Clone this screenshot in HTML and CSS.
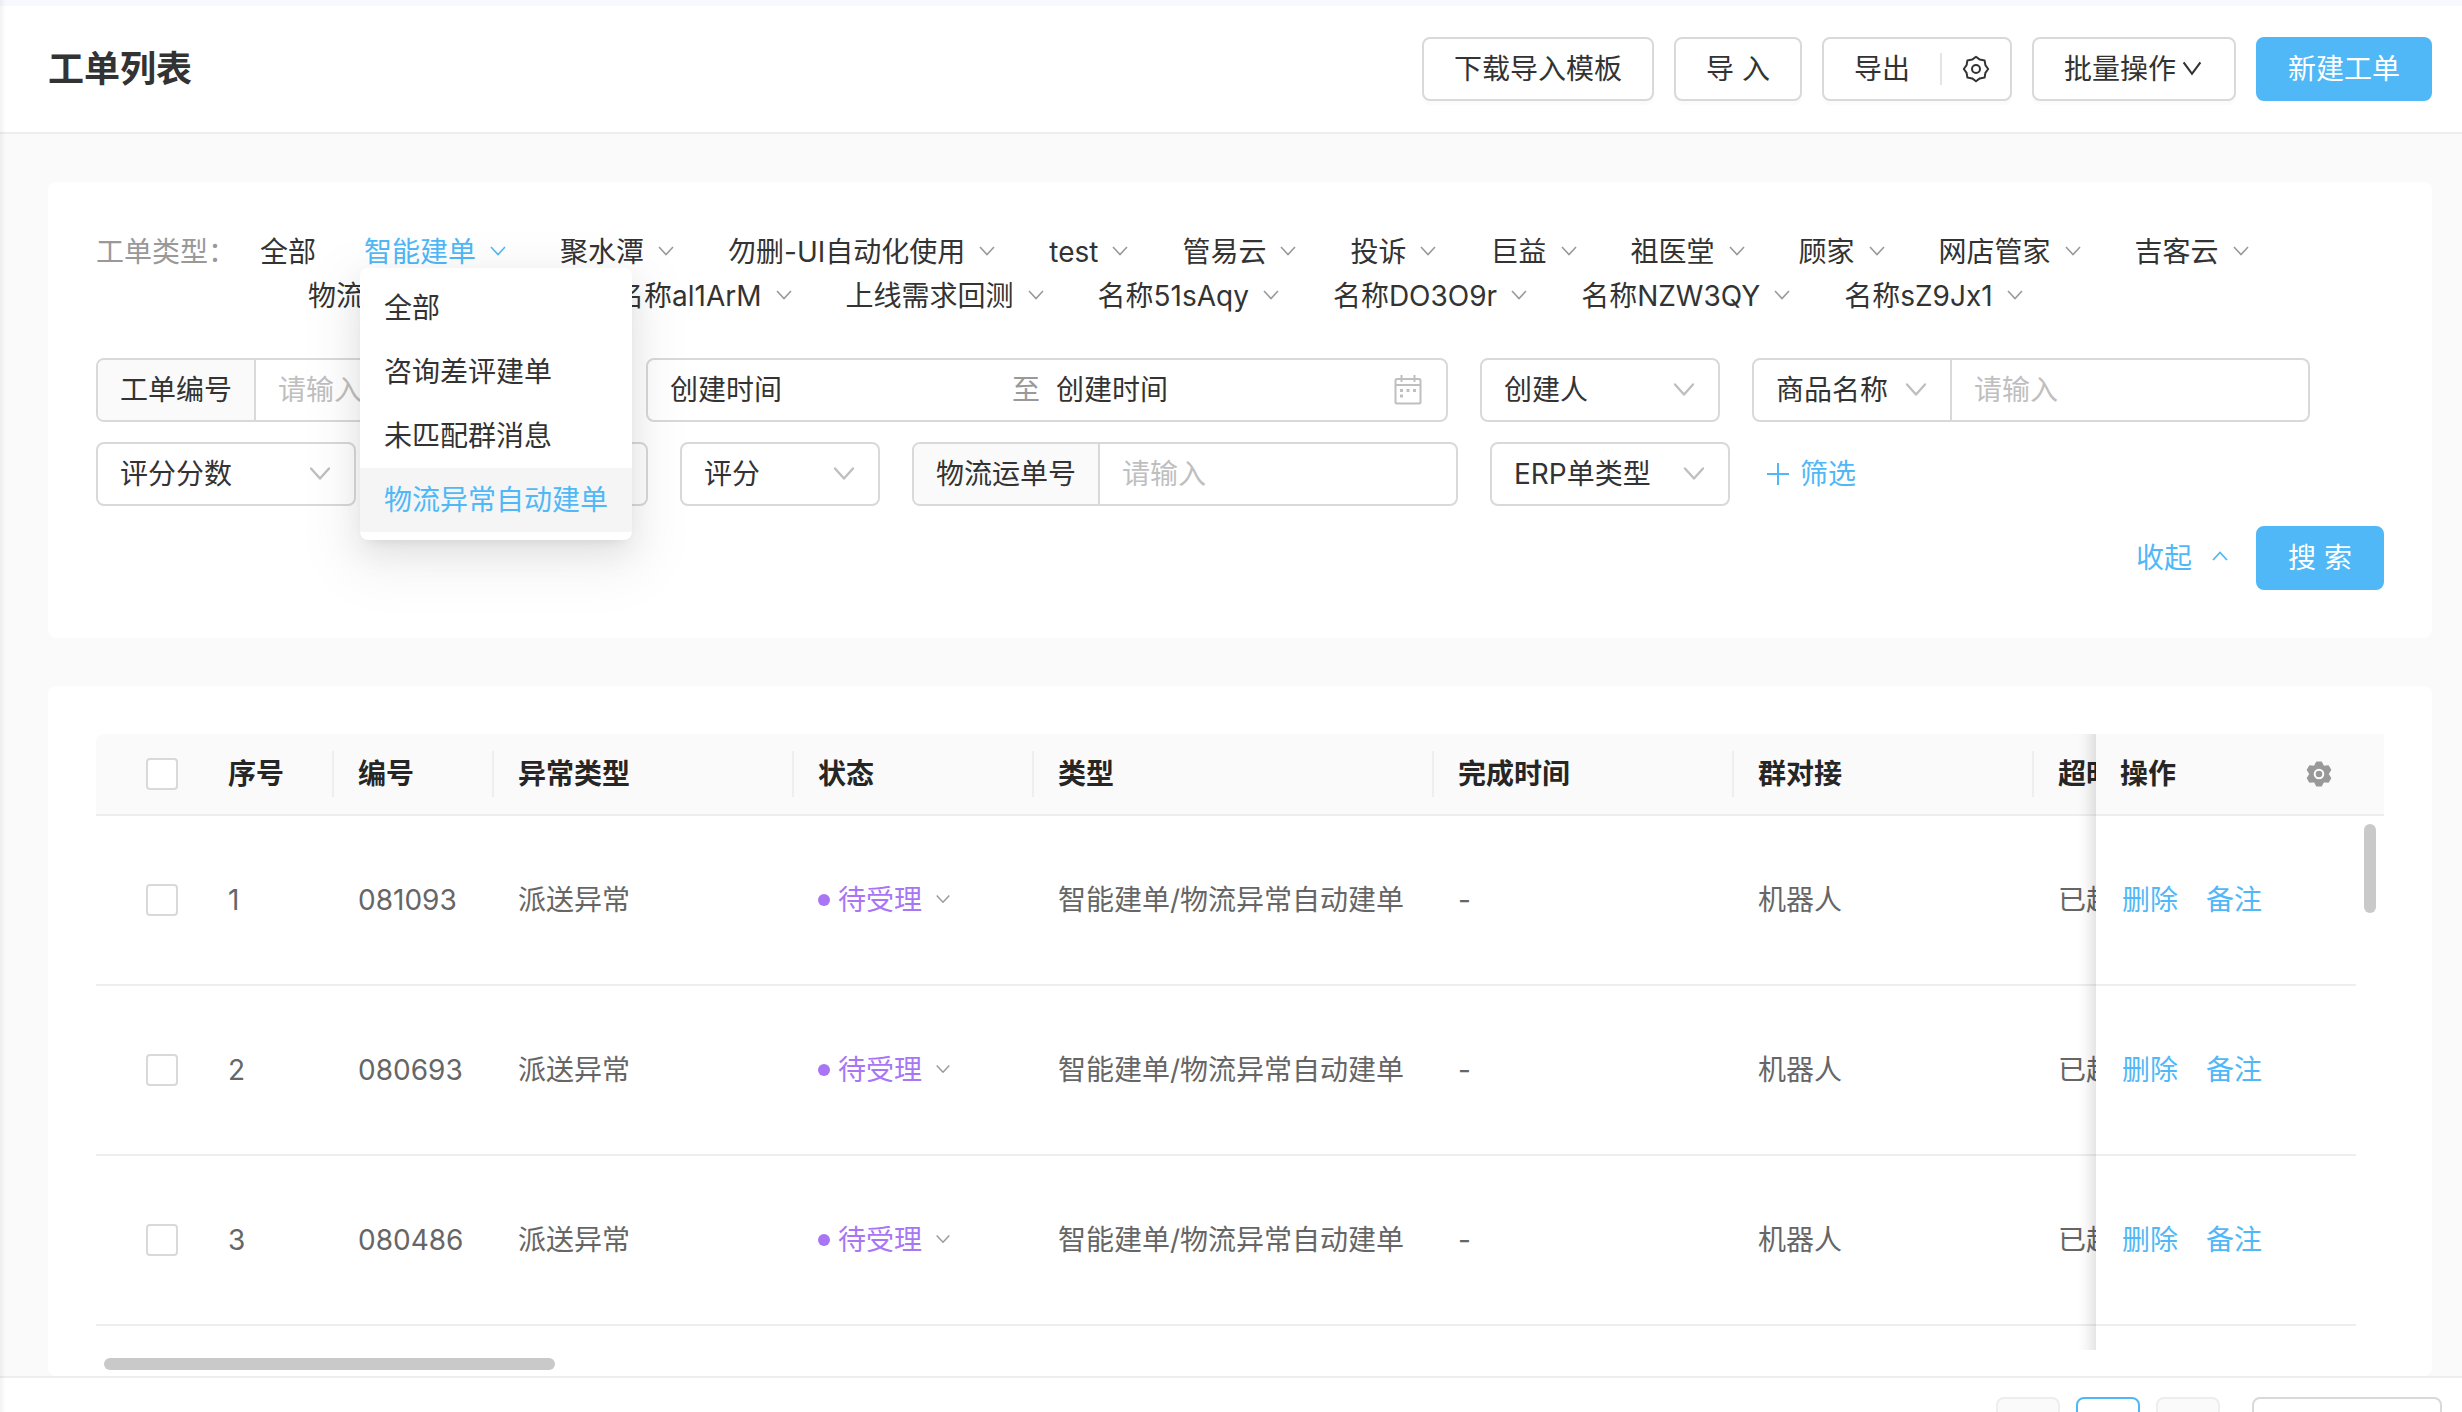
FILE: index.html
```html
<!DOCTYPE html>
<html lang="zh-CN">
<head>
<meta charset="utf-8">
<meta name="viewport" content="width=device-width, initial-scale=1">
<title>工单列表</title>
<link rel="stylesheet" href="styles.css">
</head>
<body>
<svg class="sprite" aria-hidden="true">
  <symbol id="down-lg" viewBox="0 0 20 20"><path d="M3 4.5 L10 14 L17 4.5" fill="none" stroke="currentColor" stroke-width="1.8"/></symbol>
  <symbol id="down" viewBox="0 0 20 20"><path d="M3 5 L10 12.500 L17 5" fill="none" stroke="currentColor" stroke-width="1.6"/></symbol>
  <symbol id="up" viewBox="0 0 20 20"><path d="M3 12 L10 4.500 L17 12" fill="none" stroke="currentColor" stroke-width="1.8"/></symbol>
  <symbol id="arrow" viewBox="0 0 24 24"><path d="M3 6.5 L12 16.5 L21 6.5" fill="none" stroke="currentColor" stroke-width="2.4" stroke-linecap="round" stroke-linejoin="round"/></symbol>
</svg>

<header class="page-header">
  <h1>工单列表</h1>
  <div class="actions">
    <button class="btn">下载导入模板</button>
    <button class="btn">导 入</button>
    <div class="split">
      <button class="split-main">导出</button>
      <button class="split-icon" aria-label="导出设置">
        <svg width="28" height="28" viewBox="-1 -1 28 28"><path d="M13 .8 16.8 3.6 21.6 4.4 22.4 9.2 25.2 13 22.4 16.8 21.6 21.6 16.8 22.4 13 25.2 9.2 22.4 4.4 21.6 3.6 16.8 .8 13 3.6 9.2 4.4 4.4 9.2 3.6Z" fill="none" stroke="currentColor" stroke-width="2" stroke-linejoin="round"/><circle cx="13" cy="13" r="4" fill="none" stroke="currentColor" stroke-width="2"/></svg>
      </button>
    </div>
    <button class="btn btn-caret">批量操作<svg width="24" height="24"><use href="#down-lg"/></svg></button>
    <button class="btn primary">新建工单</button>
  </div>
</header>

<main>
  <section class="card filters">
    <div class="types">
      <span class="types-label">工单类型：</span>
      <ul class="type-list">
        <li><a href="#">全部</a></li>
        <li class="active">
          <a href="#">智能建单<svg><use href="#down"/></svg></a>
          <ul class="menu">
            <li><a href="#">全部</a></li>
            <li><a href="#">咨询差评建单</a></li>
            <li><a href="#">未匹配群消息</a></li>
            <li class="selected"><a href="#">物流异常自动建单</a></li>
          </ul>
        </li>
        <li><a href="#">聚水潭<svg><use href="#down"/></svg></a></li>
        <li><a href="#">勿删-UI自动化使用<svg><use href="#down"/></svg></a></li>
        <li><a href="#">test<svg><use href="#down"/></svg></a></li>
        <li><a href="#">管易云<svg><use href="#down"/></svg></a></li>
        <li><a href="#">投诉<svg><use href="#down"/></svg></a></li>
        <li><a href="#">巨益<svg><use href="#down"/></svg></a></li>
        <li><a href="#">祖医堂<svg><use href="#down"/></svg></a></li>
        <li><a href="#">顾家<svg><use href="#down"/></svg></a></li>
        <li><a href="#">网店管家<svg><use href="#down"/></svg></a></li>
        <li><a href="#">吉客云<svg><use href="#down"/></svg></a></li>
        <li><a href="#">物流异常自动建单<svg><use href="#down"/></svg></a></li>
        <li><a href="#">名称al1ArM<svg><use href="#down"/></svg></a></li>
        <li><a href="#">上线需求回测<svg><use href="#down"/></svg></a></li>
        <li><a href="#">名称51sAqy<svg><use href="#down"/></svg></a></li>
        <li><a href="#">名称DO3O9r<svg><use href="#down"/></svg></a></li>
        <li><a href="#">名称NZW3QY<svg><use href="#down"/></svg></a></li>
        <li><a href="#">名称sZ9Jx1<svg><use href="#down"/></svg></a></li>
      </ul>
    </div>

    <form class="fields">
      <div class="field-row">
        <div class="group">
          <label class="addon" for="order-no">工单编号</label>
          <input id="order-no" type="text" placeholder="请输入">
        </div>
        <div class="range">
          <input class="range-start" type="text" placeholder="创建时间" aria-label="创建时间起">
          <span class="range-sep">至</span>
          <input class="range-end" type="text" placeholder="创建时间" aria-label="创建时间止">
          <svg class="calendar" width="28" height="30" viewBox="0 0 28 30"><g fill="none" stroke="currentColor" stroke-width="2"><rect x="1.5" y="4" width="25" height="24.5" rx="1.5"/><path d="M1.5 10H26.5M7.5 0V7M20.5 0V7"/></g><path fill="currentColor" d="M6 14h3v3H6zM12.500 14h3v3h-3zM19 14h3v3h-3zM6 19.500h3v3H6z"/></svg>
        </div>
        <div class="select w-240">
          <select aria-label="创建人"><option>创建人</option></select>
          <svg><use href="#arrow"/></svg>
        </div>
        <div class="group">
          <div class="addon-select">
            <select aria-label="商品字段"><option>商品名称</option></select>
            <svg><use href="#arrow"/></svg>
          </div>
          <input type="text" placeholder="请输入" aria-label="商品名称">
        </div>
      </div>
      <div class="field-row">
        <div class="select w-260">
          <select aria-label="评分分数"><option>评分分数</option></select>
          <svg><use href="#arrow"/></svg>
        </div>
        <div class="select w-260">
          <select aria-label="评分类型"></select>
        </div>
        <div class="select w-200">
          <select aria-label="评分"><option>评分</option></select>
          <svg><use href="#arrow"/></svg>
        </div>
        <div class="group">
          <label class="addon" for="ship-no">物流运单号</label>
          <input id="ship-no" type="text" placeholder="请输入">
        </div>
        <div class="select w-240">
          <select aria-label="ERP单类型"><option>ERP单类型</option></select>
          <svg><use href="#arrow"/></svg>
        </div>
        <button type="button" class="add-filter"><svg width="24" height="24" viewBox="0 0 24 24"><path d="M12 1V23M1 12H23" stroke="currentColor" stroke-width="2"/></svg>筛选</button>
      </div>
      <div class="submit-row">
        <button type="button" class="collapse">收起<svg width="20" height="20"><use href="#up"/></svg></button>
        <button type="submit" class="btn primary">搜 索</button>
      </div>
    </form>
  </section>

  <section class="card list">
    <div class="table-wrap">
      <table>
        <colgroup>
          <col class="c-check"><col class="c-index"><col class="c-no"><col class="c-300"><col class="c-240"><col class="c-400"><col class="c-300"><col class="c-300"><col class="c-300"><col class="c-op"><col class="c-bar">
        </colgroup>
        <thead>
          <tr>
            <th><input type="checkbox" aria-label="全选"></th>
            <th class="sep">序号</th>
            <th class="sep">编号</th>
            <th class="sep">异常类型</th>
            <th class="sep">状态</th>
            <th class="sep">类型</th>
            <th class="sep">完成时间</th>
            <th class="sep">群对接</th>
            <th>超时状态</th>
            <th class="op"><div class="op-head">操作<button aria-label="列设置"><svg width="26" height="26" viewBox="0 0 26 26"><path d="M15.200 1.200 10.800 1.200 8.600 5.400 3.700 5.100 1.500 8.900 4.200 13 1.500 17.100 3.700 20.900 8.600 20.600 10.800 24.800 15.200 24.800 17.400 20.600 22.300 20.900 24.500 17.100 21.800 13 24.500 8.900 22.300 5.100 17.400 5.400Z" fill="#999" stroke="#999" stroke-width="1.500" stroke-linejoin="round"/><circle cx="13" cy="13" r="4.300" fill="none" stroke="#fff" stroke-width="2"/></svg></button></div></th>
            <th class="bar"></th>
          </tr>
        </thead>
        <tbody>
          <tr>
            <td><input type="checkbox" aria-label="选择 081093"></td>
            <td>1</td><td>081093</td><td>派送异常</td>
            <td><button class="status">待受理<svg><use href="#down"/></svg></button></td>
            <td>智能建单/物流异常自动建单</td><td>-</td><td>机器人</td><td>已超时</td>
            <td class="op"><a href="#">删除</a><a href="#">备注</a></td><td class="bar"></td>
          </tr>
          <tr>
            <td><input type="checkbox" aria-label="选择 080693"></td>
            <td>2</td><td>080693</td><td>派送异常</td>
            <td><button class="status">待受理<svg><use href="#down"/></svg></button></td>
            <td>智能建单/物流异常自动建单</td><td>-</td><td>机器人</td><td>已超时</td>
            <td class="op"><a href="#">删除</a><a href="#">备注</a></td><td class="bar"></td>
          </tr>
          <tr>
            <td><input type="checkbox" aria-label="选择 080486"></td>
            <td>3</td><td>080486</td><td>派送异常</td>
            <td><button class="status">待受理<svg><use href="#down"/></svg></button></td>
            <td>智能建单/物流异常自动建单</td><td>-</td><td>机器人</td><td>已超时</td>
            <td class="op"><a href="#">删除</a><a href="#">备注</a></td><td class="bar"></td>
          </tr>
        </tbody>
      </table>
      <div class="fixed-shadow"></div>
      <div class="v-thumb"></div>
    </div>
    <div class="h-thumb"></div>
  </section>
</main>

<footer class="pager">
  <span class="total">共 1168 条数据</span>
  <div class="pages">
    <button class="page disabled" disabled aria-label="上一页">‹</button>
    <button class="page current">1</button>
    <button class="page disabled" disabled aria-label="下一页">›</button>
    <select class="page-size" aria-label="每页条数"><option>20 条/页</option></select>
  </div>
</footer>
</body>
</html>
```
FILE: styles.css
```css
* { box-sizing: border-box; }

body {
  position: relative;
  height: 100vh;
  margin: 0;
  overflow: hidden;
  background: #fafafa;
  color: #333;
  font-family: Inter, "Noto Sans CJK SC", sans-serif;
  font-size: 28px;
  line-height: 44px;
}

/* shadow cast by the side navigation on the left edge */
body::before {
  content: "";
  position: absolute;
  z-index: 5;
  top: 0;
  bottom: 0;
  left: 0;
  width: 6px;
  background: linear-gradient(to right, rgba(0, 0, 0, .05), rgba(0, 0, 0, 0));
}

.sprite { display: none; }
button, input, select { font: inherit; color: inherit; }
button { padding: 0; border: 0; background: none; cursor: pointer; }
a { color: inherit; text-decoration: none; }
ul { margin: 0; padding: 0; list-style: none; }
svg { flex: none; }

/* header */
.page-header {
  display: flex;
  align-items: center;
  justify-content: space-between;
  height: 134px;
  padding: 0 30px 0 48px;
  border-top: 6px solid #f7f9ff;
  border-bottom: 2px solid #eee;
  background: #fff;
}
h1 { margin: 0; font-size: 36px; font-weight: 600; line-height: 56px; }
.actions { display: flex; gap: 20px; }

.btn, .split {
  height: 64px;
  border: 2px solid #d9d9d9;
  border-radius: 8px;
  background: #fff;
  box-shadow: 0 4px 0 rgba(0, 0, 0, .016);
  white-space: nowrap;
}
.btn { padding: 0 30px; }
.btn-caret { display: flex; align-items: center; gap: 4px; }
.primary { border-color: #50b8f7; background: #50b8f7; color: #fff; }
.page-header .primary, .submit-row .primary { box-shadow: none; }
.split { display: flex; align-items: center; }
.split-main { padding: 0 30px; }
.split-icon {
  display: flex;
  align-items: center;
  height: 32px;
  padding: 0 20px;
  border-left: 2px solid #e4e4e4;
}

/* cards */
main { display: flex; flex-direction: column; gap: 48px; padding: 48px 30px 0 48px; }
.card { border-radius: 8px; background: #fff; padding: 48px; }

/* ticket types */
.types { display: flex; }
.types-label { width: 164px; flex: none; color: #999; }
.type-list { display: flex; flex-wrap: wrap; flex: 1; }
.type-list > li { position: relative; margin-left: 48px; }
.type-list > li:first-child { margin-left: 0; }
.type-list > li > a { display: flex; align-items: center; white-space: nowrap; }
.type-list > li > a svg { width: 20px; height: 20px; margin: 0 4px 0 12px; color: #999; }
.type-list > .active > a, .type-list > .active > a svg { color: #50b8f7; }

.menu {
  position: absolute;
  z-index: 3;
  top: 38px;
  left: -4px;
  padding: 8px 0;
  border-radius: 8px;
  background: #fff;
  box-shadow: 0 6px 12px -8px rgba(0, 0, 0, .12), 0 12px 32px rgba(0, 0, 0, .08), 0 18px 56px 16px rgba(0, 0, 0, .05);
}
.menu a { display: block; padding: 10px 24px; white-space: nowrap; }
.menu .selected { background: #f5f5f5; color: #50b8f7; }

/* search fields */
.fields { display: flex; flex-direction: column; gap: 20px; margin-top: 40px; }
.field-row { display: flex; gap: 32px; }
.group, .range, .select {
  display: flex;
  align-items: center;
  height: 64px;
  border: 2px solid #d9d9d9;
  border-radius: 8px;
  background: #fff;
  overflow: hidden;
}
.fields input { min-width: 0; border: 0; outline: 0; background: none; }
.fields input::placeholder { color: #bfbfbf; opacity: 1; }
.group > input { width: 356px; height: 60px; padding: 0 22px; }
.addon {
  padding: 8px 22px;
  border-right: 2px solid #d9d9d9;
  background: #fafafa;
}
.range { width: 802px; padding: 0 24px 0 22px; }
.fields .range input::placeholder { color: #333; }
.range input { padding: 0; flex: 1; }
.range-sep { margin: 0 16px; color: #999; }
.calendar { margin-left: 12px; color: #bfbfbf; }

.fields select {
  flex: 1;
  min-width: 0;
  height: 60px;
  padding: 0;
  border: 0;
  outline: 0;
  appearance: none;
  background: none;
}
.select { padding: 0 22px; }
.select svg, .addon-select svg { width: 24px; height: 24px; color: #bfbfbf; }
.addon-select {
  display: flex;
  align-items: center;
  width: 198px;
  padding: 0 22px;
  border-right: 2px solid #d9d9d9;
}
.w-200 { width: 200px; }
.w-240 { width: 240px; }
.w-260 { width: 260px; }
.add-filter { display: flex; align-items: center; gap: 10px; margin-left: 4px; color: #50b8f7; }

.submit-row { display: flex; justify-content: flex-end; gap: 26px; }
.collapse { display: flex; align-items: center; gap: 18px; color: #50b8f7; }

/* list */
.list { padding-bottom: 6px; }
.table-wrap { position: relative; padding-bottom: 24px; overflow: hidden; border-top-left-radius: 8px; }
table { width: 2526px; table-layout: fixed; border-collapse: separate; border-spacing: 0; }
.c-check { width: 108px; }
.c-index { width: 130px; }
.c-no { width: 160px; }
.c-240 { width: 240px; }
.c-300 { width: 300px; }
.c-400 { width: 400px; }
.c-op { width: 260px; }
.c-bar { width: 28px; }

th, td { padding: 0 24px; border-bottom: 2px solid #eee; text-align: left; white-space: nowrap; }
th { position: relative; height: 82px; background: #fafafa; color: #262626; font-weight: 600; }
td { height: 170px; background: #fff; color: #666; }
th:first-child, td:first-child { padding: 0 26px 0 50px; }
.sep::after {
  content: "";
  position: absolute;
  top: 17px;
  right: 0;
  width: 2px;
  height: 46px;
  background: #eee;
}
th.op, td.op { position: sticky; z-index: 2; right: 28px; }
td.op { padding-left: 26px; }
th.bar, td.bar { position: sticky; z-index: 2; right: 0; padding: 0; }
td.bar { border-bottom-color: #fff; }
.op-head { display: flex; align-items: center; justify-content: space-between; }
.op-head button { display: flex; }
td.op a { margin-right: 28px; color: #50b8f7; }

input[type="checkbox"] {
  display: block;
  width: 32px;
  height: 32px;
  margin: 0;
  border: 2px solid #d9d9d9;
  border-radius: 4px;
  appearance: none;
  background: #fff;
}

.status { display: flex; align-items: center; color: #a876f5; }
.status::before { content: ""; width: 12px; height: 12px; margin-right: 8px; border-radius: 50%; background: #a876f5; }
.status svg { width: 18px; height: 18px; margin-left: 12px; color: #999; }

.fixed-shadow {
  position: absolute;
  z-index: 1;
  top: 0;
  right: 288px;
  bottom: 0;
  width: 60px;
  box-shadow: inset -20px 0 16px -16px rgba(0, 0, 0, .15);
}
.v-thumb {
  position: absolute;
  z-index: 3;
  top: 90px;
  right: 8px;
  width: 12px;
  height: 89px;
  border-radius: 6px;
  background: #c9c9c9;
}
.h-thumb { width: 451px; height: 12px; margin: 8px 0 0 8px; border-radius: 6px; background: #c9c9c9; }

/* pagination */
.pager {
  display: flex;
  justify-content: space-between;
  padding: 19px 20px 20px 48px;
  border-top: 2px solid #eee;
  background: #fff;
}
.total { line-height: 64px; color: #666; }
.pages { display: flex; gap: 16px; }
.page { width: 64px; height: 64px; border: 2px solid #d9d9d9; border-radius: 8px; background: #fff; }
.page.current { border-color: #50b8f7; color: #50b8f7; }
.page.disabled { border-color: #eee; background: #fafafa; color: #bfbfbf; }
.page-size {
  width: 190px;
  height: 64px;
  margin-left: 16px;
  padding: 0 22px;
  border: 2px solid #d9d9d9;
  border-radius: 8px;
  appearance: none;
  background: #fff;
}
```
